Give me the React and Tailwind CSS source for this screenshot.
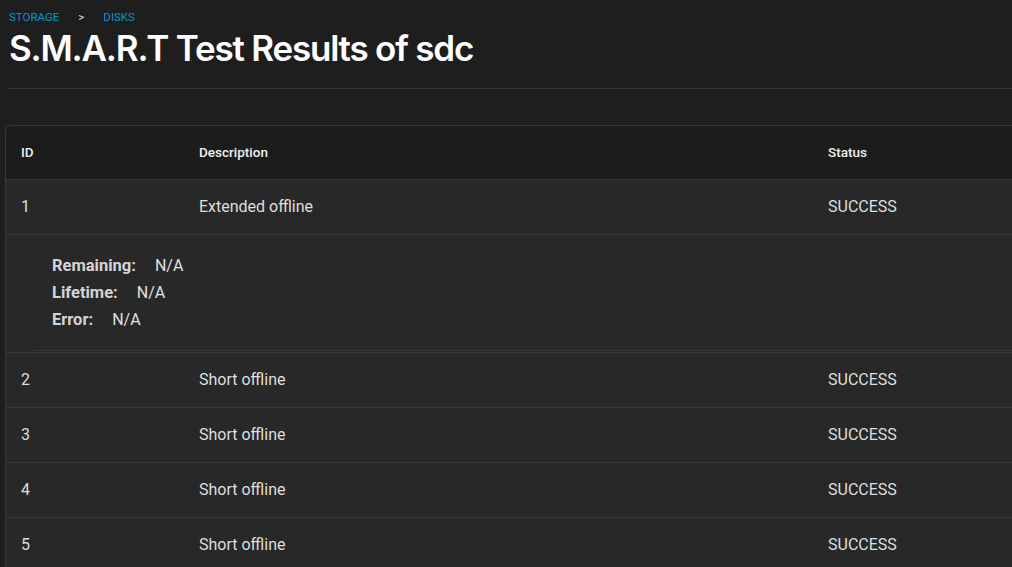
import React from 'react';

const tests = [
  { id: 1, description: 'Extended offline', status: 'SUCCESS', remaining: 'N/A', lifetime: 'N/A', error: 'N/A', expanded: true },
  { id: 2, description: 'Short offline', status: 'SUCCESS' },
  { id: 3, description: 'Short offline', status: 'SUCCESS' },
  { id: 4, description: 'Short offline', status: 'SUCCESS' },
  { id: 5, description: 'Short offline', status: 'SUCCESS' },
];

const SmartResultsPage = () => {
  return (
    <div className="min-h-screen w-[1012px] h-[567px] overflow-hidden bg-[#1e1e1e] text-[#e0e0e0] font-['Roboto',sans-serif]">
      {/* Page header */}
      <div className="pl-[9px] pt-[9px]">
        <div className="flex items-center text-[11.5px] leading-4 text-[#0095d5]">
          <span>STORAGE</span>
          <span className="ml-[19px] mr-[19px] text-[#e0e0e0]">&gt;</span>
          <span>DISKS</span>
        </div>
        <h1 className="mt-[3px] text-[35px] leading-[40px] font-semibold tracking-[-1.2px] text-white font-['Inter',sans-serif]">
          S.M.A.R.T Test Results of sdc
        </h1>
        <div className="mt-[20px] h-px bg-[#363636]"></div>
      </div>

      {/* Results table */}
      <div className="mt-[36px] ml-[5px] border border-[#383838] border-r-0 rounded-tl-md overflow-hidden">
        <div className="flex items-center h-[53px] bg-[#1c1c1c] text-[13.5px] font-medium text-[#f0f0f0]">
          <div className="w-[193px] pl-[15px]">ID</div>
          <div className="w-[629px]">Description</div>
          <div>Status</div>
        </div>
        {tests.map((t) => (
          <div key={t.id}>
            <div className="flex items-center h-[55px] bg-[#282828] border-t border-[#383838] text-[16px] text-[#dedede]">
              <div className="w-[193px] pl-[15px]">{t.id}</div>
              <div className="w-[629px]">{t.description}</div>
              <div>{t.status}</div>
            </div>
            {t.expanded && (
              <div className="bg-[#282828] border-t border-[#383838]">
                <div className="pl-[46px] pt-[20px] pb-[19px] flex flex-col gap-[5px] text-[16px] leading-[22px]">
                  <div><span className="font-bold text-[16.5px] text-[#d4d4d4] mr-[19px]">Remaining:</span>{t.remaining}</div>
                  <div><span className="font-bold text-[16.5px] text-[#d4d4d4] mr-[19px]">Lifetime:</span>{t.lifetime}</div>
                  <div><span className="font-bold text-[16.5px] text-[#d4d4d4] mr-[19px]">Error:</span>{t.error}</div>
                </div>
                <div className="ml-[28px] h-px bg-[#363636]"></div>
                <div className="h-px"></div>
              </div>
            )}
          </div>
        ))}
      </div>
    </div>
  );
};

export default SmartResultsPage;
